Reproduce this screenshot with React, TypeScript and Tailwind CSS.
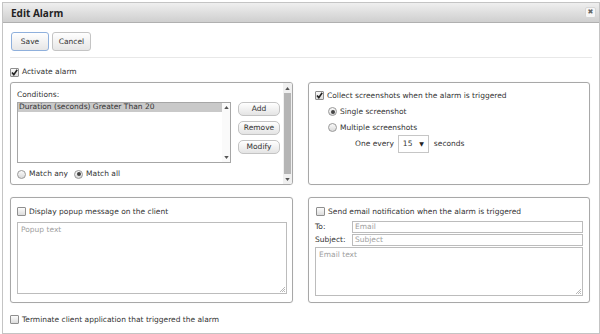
import React from 'react';

const Check = ({ checked = false }: { checked?: boolean }) => (
    <span className="relative inline-block w-[9px] h-[9px] shrink-0 border border-[#8f8f8f] bg-gradient-to-b from-[#fcfcfc] to-[#dcdcdc] rounded-[1px]">
        {checked && (
            <svg viewBox="0 0 9 9" className="absolute left-[-1px] top-[-1px] w-[9px] h-[9px]">
                <path d="M2 4.5 L3.8 6.6 L7.2 1.8" fill="none" stroke="#222" strokeWidth="1.6" />
            </svg>
        )}
    </span>
)

const Radio = ({ checked = false }: { checked?: boolean }) => (
    <span className="relative inline-flex items-center justify-center w-[9px] h-[9px] shrink-0 rounded-full border border-[#999] bg-gradient-to-b from-[#fafafa] to-[#dadada]">
        {checked && <span className="w-[4px] h-[4px] rounded-full bg-[#444]" />}
    </span>
)

const Btn = ({ label, focus = false, cls = '' }: { label: string, focus?: boolean, cls?: string }) => (
    <button
        className={`flex items-center justify-center rounded-[3px] border bg-gradient-to-b from-[#ffffff] to-[#e6e6e6] text-[#333] ${focus ? 'border-[#8fb0dc]' : 'border-[#c4c4c4]'} ${cls}`}>
        {label}
    </button>
)

const SmallBtn = ({ label }: { label: string }) => (
    <button className="flex items-center justify-center w-[42px] h-[14px] rounded-[5px] border border-[#c4c4c4] bg-gradient-to-b from-[#ffffff] to-[#e4e4e4] text-[#333]">
        {label}
    </button>
)

const Arrow = ({ up }: { up?: boolean }) => (
    <svg viewBox="0 0 6 4" className="w-[5px] h-[3px]">
        <path d={up ? 'M0 4 L3 0 L6 4 Z' : 'M0 0 L6 0 L3 4 Z'} fill="#555" />
    </svg>
)

const Panel = ({ children, cls = '' }: { children: React.ReactNode, cls?: string }) => (
    <div className={`relative rounded-[3px] border border-[#a8a8a8] shadow-[0_0_1px_rgba(0,0,0,0.15)] ${cls}`}>
        {children}
    </div>
)

const Resize = () => (
    <svg viewBox="0 0 5 5" className="absolute right-[1px] bottom-[1px] w-[5px] h-[5px]">
        <path d="M5 0 L0 5 M5 2 L2 5 M5 4 L4 5" stroke="#999" strokeWidth="0.7" />
    </svg>
)

const App = () => {
    return (
        <div className="w-[600px] h-[334px] bg-white pl-[2px] pt-[2px] text-[7.5px] text-[#333] leading-none" style={{ fontFamily: '"DejaVu Sans", Verdana, sans-serif' }}>
            <div className="w-[598px] h-[332px] border border-[#c4c4c4] flex flex-col">
                {/* title bar */}
                <div className="h-[20px] flex items-center justify-between pl-[8px] pr-[3px] bg-gradient-to-b from-[#efefef] to-[#cfcfcf] border-b border-[#b0b0b0]">
                    <span className="text-[10px] font-bold text-[#222]" style={{ fontFamily: '"Open Sans", sans-serif' }}>Edit Alarm</span>
                    <span className="flex items-center justify-center w-[11px] h-[11px] rounded-[2px] border border-[#d6d6d6] bg-[#f6f6f6] text-[#666] text-[7px]">✖</span>
                </div>

                <div className="flex flex-col px-[7px]">
                    <div className="flex gap-[3px] mt-[9px] ml-[1px]">
                        <Btn label="Save" focus cls="w-[38px] h-[19px]" />
                        <Btn label="Cancel" cls="w-[39px] h-[19px]" />
                    </div>
                    <div className="mt-[6px] h-px bg-[#e8e8e8]" />

                    <label className="flex items-center gap-[3px] mt-[9px] h-[10px]">
                        <Check checked />
                        <span>Activate alarm</span>
                    </label>

                    <div className="grid grid-cols-[283px_282px] gap-x-[15px] gap-y-[12px] mt-[5px]">
                        {/* conditions */}
                        <Panel cls="h-[103px] flex">
                            <div className="flex-1 flex flex-col pl-[6px] pt-[8px]">
                                <span>Conditions:</span>
                                <div className="flex mt-[3px] gap-[7px]">
                                    <div className="w-[214px] h-[61px] border border-[#a6a6a6] flex">
                                        <div className="flex-1">
                                            <div className="h-[9px] bg-[#c9c9c9] flex items-center pl-[1px]">Duration (seconds) Greater Than 20</div>
                                        </div>
                                        <div className="w-[8px] flex flex-col items-center justify-between py-[3px] bg-[#fafafa]">
                                            <Arrow up />
                                            <Arrow />
                                        </div>
                                    </div>
                                    <div className="flex flex-col gap-[5px]">
                                        <SmallBtn label="Add" />
                                        <SmallBtn label="Remove" />
                                        <SmallBtn label="Modify" />
                                    </div>
                                </div>
                                <div className="flex items-center mt-[7px]">
                                    <Radio />
                                    <span className="ml-[3px]">Match any</span>
                                    <span className="ml-[6px]"><Radio checked /></span>
                                    <span className="ml-[3px]">Match all</span>
                                </div>
                            </div>
                            <div className="w-[9px] flex flex-col items-center bg-[#f0f0f0] rounded-r-[2px]">
                                <div className="h-[10px] flex items-center"><Arrow up /></div>
                                <div className="flex-1 w-[7px] bg-[#b5b5b5]" />
                                <div className="h-[10px] flex items-center"><Arrow /></div>
                            </div>
                        </Panel>

                        {/* screenshots */}
                        <Panel cls="h-[103px] flex flex-col pl-[6px] pt-[8px]">
                            <label className="flex items-center gap-[3px]">
                                <Check checked />
                                <span>Collect screenshots when the alarm is triggered</span>
                            </label>
                            <div className="flex flex-col pl-[13px] mt-[7px] gap-[7px]">
                                <label className="flex items-center gap-[3px]">
                                    <Radio checked />
                                    <span>Single screenshot</span>
                                </label>
                                <label className="flex items-center gap-[3px]">
                                    <Radio />
                                    <span>Multiple screenshots</span>
                                </label>
                            </div>
                            <div className="flex items-center pl-[40px] mt-[3px]">
                                <span>One every</span>
                                <div className="ml-[4px] w-[31px] h-[18px] border border-[#c6c6c6] bg-white flex items-center justify-between px-[4px]">
                                    <span>15</span>
                                    <span className="text-[6px] text-[#222]">▼</span>
                                </div>
                                <span className="ml-[5px]">seconds</span>
                            </div>
                        </Panel>

                        {/* popup */}
                        <Panel cls="h-[106px] flex flex-col pl-[6px] pr-[5px] pt-[9px]">
                            <label className="flex items-center gap-[3px]">
                                <Check />
                                <span>Display popup message on the client</span>
                            </label>
                            <div className="relative mt-[6px] h-[72px] border border-[#bcbcbc] text-[#a0a0a0] pl-[3px] pt-[3px]">
                                Popup text
                                <Resize />
                            </div>
                        </Panel>

                        {/* email */}
                        <Panel cls="h-[106px] flex flex-col pl-[6px] pr-[6px] pt-[9px]">
                            <label className="flex items-center gap-[3px] ml-[1px]">
                                <Check />
                                <span>Send email notification when the alarm is triggered</span>
                            </label>
                            <div className="flex items-center mt-[5px]">
                                <span className="w-[37px]">To:</span>
                                <div className="flex-1 h-[12px] border border-[#bcbcbc] text-[#a0a0a0] flex items-center pl-[2px]">Email</div>
                            </div>
                            <div className="flex items-center mt-[1px]">
                                <span className="w-[37px]">Subject:</span>
                                <div className="flex-1 h-[12px] border border-[#bcbcbc] text-[#a0a0a0] flex items-center pl-[2px]">Subject</div>
                            </div>
                            <div className="relative mt-[1px] h-[49px] border border-[#bcbcbc] text-[#a0a0a0] pl-[3px] pt-[3px]">
                                Email text
                                <Resize />
                            </div>
                        </Panel>
                    </div>

                    <label className="flex items-center gap-[3px] mt-[12px]">
                        <Check />
                        <span>Terminate client application that triggered the alarm</span>
                    </label>
                </div>
            </div>
        </div>
    )
}

export default App
